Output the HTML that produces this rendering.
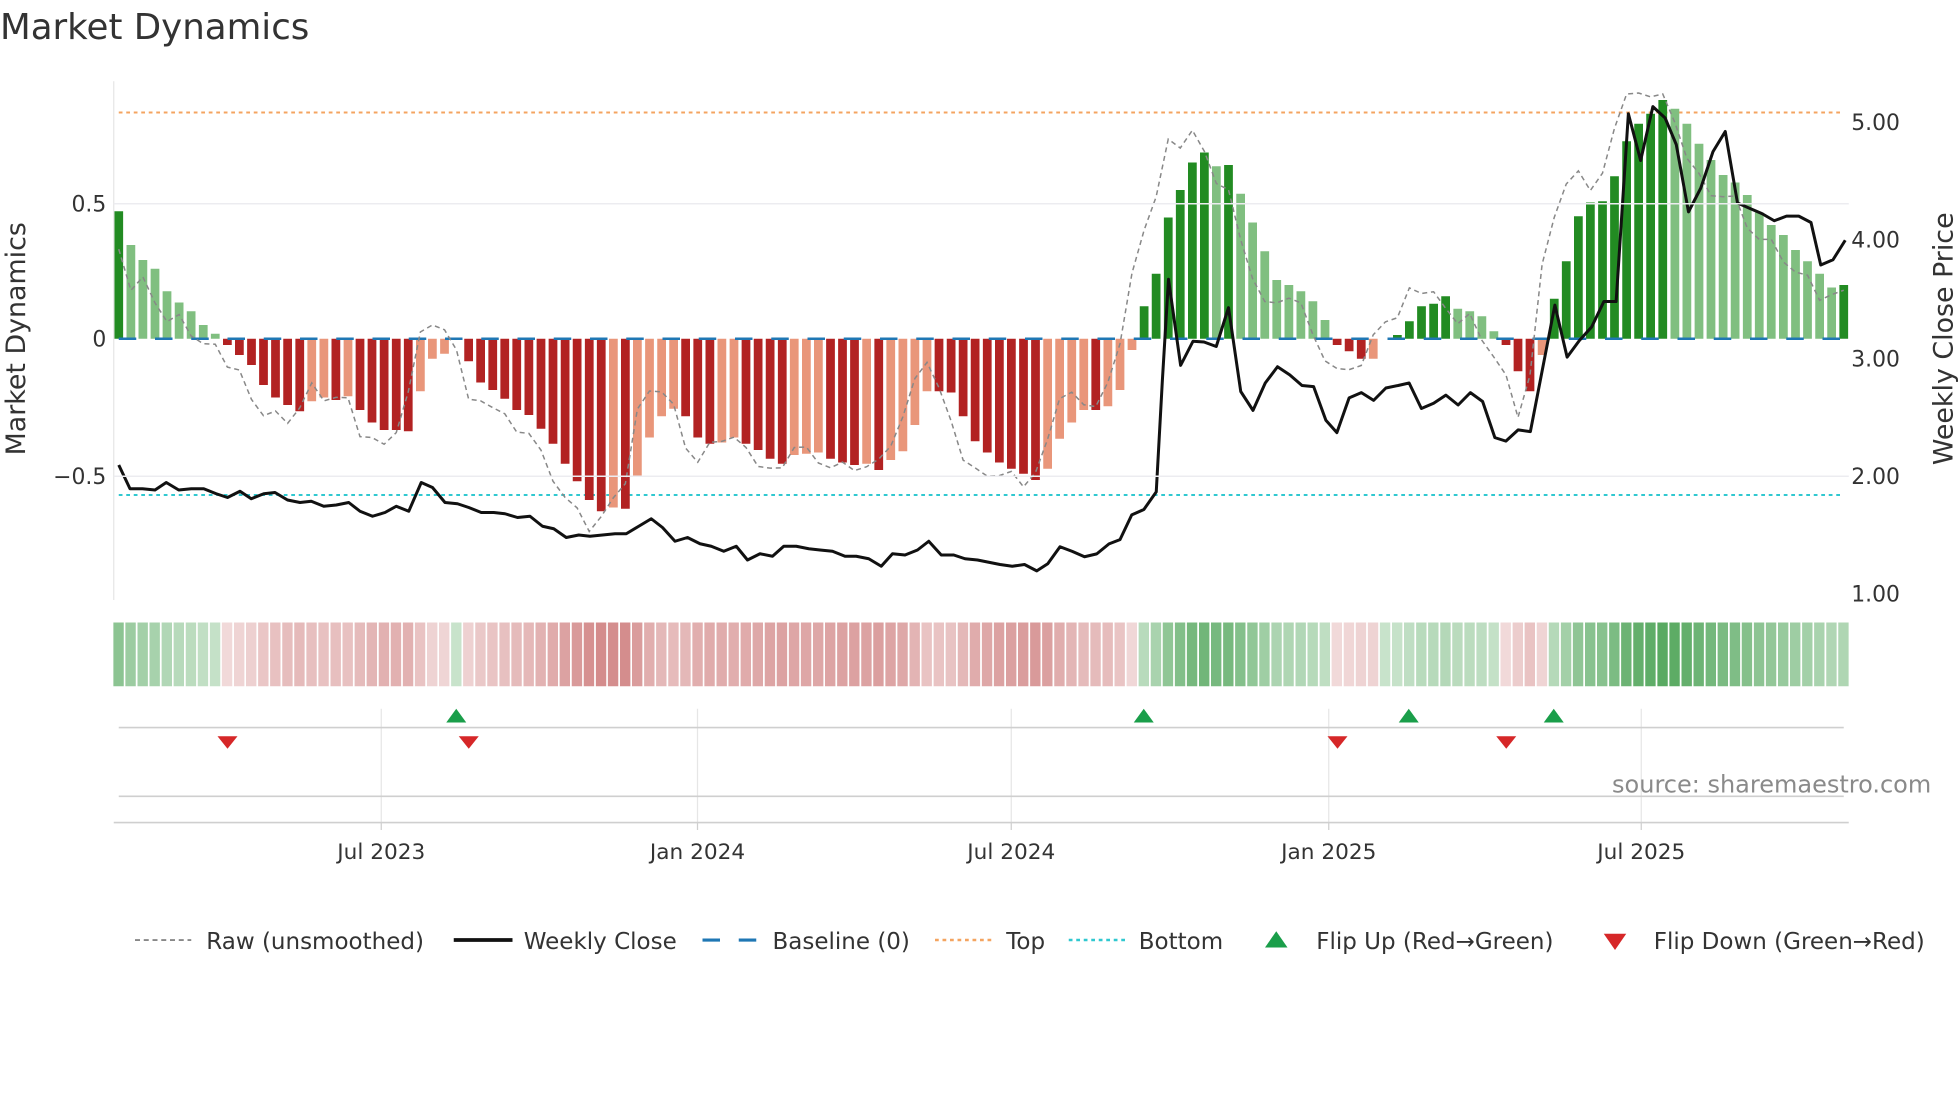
<!DOCTYPE html>
<html><head><meta charset="utf-8">
<style>
html,body{margin:0;padding:0;background:#fff;}
svg{display:block;}
text{font-family:"DejaVu Sans","Liberation Sans",sans-serif;}
</style></head>
<body>
<svg id="c" width="1960" height="1102" viewBox="0 0 1568 881.6" xmlns="http://www.w3.org/2000/svg">
<rect width="1568" height="881.6" fill="#fff"/>
<text x="0" y="31" font-size="28.5" fill="#333">Market Dynamics</text>
<g id="g"></g>
<line x1="91" y1="65" x2="91" y2="480" stroke="#e6e6e6" stroke-width="1"/>
<line x1="91" y1="163" x2="1479" y2="163" stroke="#ececf0" stroke-width="1.2"/>
<line x1="91" y1="381" x2="1479" y2="381" stroke="#ececf0" stroke-width="1.2"/>
<text x="85" y="169" font-size="17.5" fill="#333" text-anchor="end">0.5</text>
<text x="85" y="277" font-size="17.5" fill="#333" text-anchor="end">0</text>
<text x="85" y="387" font-size="17.5" fill="#333" text-anchor="end">−0.5</text>
<text x="1481" y="104" font-size="17.5" fill="#333">5.00</text>
<text x="1481" y="198" font-size="17.5" fill="#333">4.00</text>
<text x="1481" y="293" font-size="17.5" fill="#333">3.00</text>
<text x="1481" y="387" font-size="17.5" fill="#333">2.00</text>
<text x="1481" y="481" font-size="17.5" fill="#333">1.00</text>
<text transform="translate(20,271) rotate(-90)" font-size="21.5" fill="#333" text-anchor="middle">Market Dynamics</text>
<text transform="translate(1562,271) rotate(-90)" font-size="21.5" fill="#333" text-anchor="middle">Weekly Close Price</text>
<g stroke="#e6e6e6" stroke-width="1">
<line x1="305" y1="567" x2="305" y2="658"/><line x1="558" y1="567" x2="558" y2="658"/>
<line x1="809" y1="567" x2="809" y2="658"/><line x1="1063" y1="567" x2="1063" y2="658"/>
<line x1="1313" y1="567" x2="1313" y2="658"/>
</g>
<line x1="95" y1="582" x2="1475" y2="582" stroke="#cfcfcf" stroke-width="1.3"/>
<line x1="95" y1="637" x2="1475" y2="637" stroke="#cfcfcf" stroke-width="1.3"/>
<line x1="91" y1="658" x2="1479" y2="658" stroke="#cfcfcf" stroke-width="1.3"/>
<g stroke="#cfcfcf"><line x1="305" y1="658" x2="305" y2="664"/><line x1="558" y1="658" x2="558" y2="664"/><line x1="809" y1="658" x2="809" y2="664"/><line x1="1063" y1="658" x2="1063" y2="664"/><line x1="1313" y1="658" x2="1313" y2="664"/></g>
<g font-size="17.3" fill="#333" text-anchor="middle">
<text x="305" y="687">Jul 2023</text><text x="558" y="687">Jan 2024</text><text x="809" y="687">Jul 2024</text><text x="1063" y="687">Jan 2025</text><text x="1313" y="687">Jul 2025</text>
</g>
<text x="1545" y="634" font-size="19.2" fill="#8a8a8a" text-anchor="end">source: sharemaestro.com</text>
<g fill="#1a9e4a">
<polygon points="357,578 373,578 365,567"/><polygon points="907,578 923,578 915,567"/><polygon points="1119,578 1135,578 1127,567"/><polygon points="1235,578 1251,578 1243,567"/>
</g>
<g fill="#d62728">
<polygon points="174,589 190,589 182,599"/><polygon points="367,589 383,589 375,599"/><polygon points="1062,589 1078,589 1070,599"/><polygon points="1197,589 1213,589 1205,599"/>
</g>
<g font-size="18.4" fill="#333">
<line x1="108" y1="752" x2="153" y2="752" stroke="#888" stroke-width="1.5" stroke-dasharray="4,3"/>
<text x="165" y="759">Raw (unsmoothed)</text>
<line x1="363" y1="752" x2="410" y2="752" stroke="#111" stroke-width="3"/>
<text x="419" y="759">Weekly Close</text>
<line x1="562" y1="752" x2="606" y2="752" stroke="#1f77b4" stroke-width="2.5" stroke-dasharray="14,15"/>
<text x="618" y="759">Baseline (0)</text>
<line x1="748" y1="752" x2="793" y2="752" stroke="#f4a460" stroke-width="2" stroke-dasharray="3,3"/>
<text x="805" y="759">Top</text>
<line x1="855" y1="752" x2="900" y2="752" stroke="#30c8d0" stroke-width="2" stroke-dasharray="3,3"/>
<text x="911" y="759">Bottom</text>
<polygon points="1012,758 1030,758 1021,745" fill="#1a9e4a"/>
<text x="1053" y="759">Flip Up (Red→Green)</text>
<polygon points="1283,747 1301,747 1292,760" fill="#d62728"/>
<text x="1323" y="759">Flip Down (Green→Red)</text>
</g>
</svg>
<script>
var v=[102,75,63,56,38,29,22,11,4,
-5,-13,-21,-37,-47,-53,-58,-50,-47,-49,-46,-57,-67,-73,-73,-74,-42,-16,-12,0,-18,-35,-41,-48,-57,-61,-72,-84,-100,-114,-129,-138,-135,-136,-110,-79,-62,-56,-62,-79,-84,-83,-79,-84,-89,-96,-100,-93,-92,-91,-96,-99,-101,-100,-105,-97,-90,-69,-42,-42,-43,-62,-82,-91,-99,
-104,-108,-113,-104,-80,-67,-57,-57,-54,-41,-9,
26,52,97,119,141,149,138,139,116,93,70,47,43,38,30,15,
-5,-10,-16,-16,0,3,
14,26,28,34,24,22,18,6,
-5,-26,-42,-13,
32,62,98,109,110,130,158,172,180,191,184,172,156,143,131,125,115,101,91,83,71,62,52,41,43];
var light={};
[1,2,3,4,5,6,7,8,16,17,19,25,26,27,41,43,44,45,46,50,51,56,57,58,62,64,65,66,67,77,78,79,80,82,83,84,91,93,94,95,96,97,98,99,100,104,111,112,113,114,118].forEach(function(i){light[i]=1});
for(var i=129;i<=142;i++)light[i]=1;
var st=9.65,x0=95,s="";
function mix(c,m){return 'rgb('+c.map(function(k){return Math.round(255+(k-255)*m)}).join(',')+')';}
for(var i=0;i<v.length;i++){
 var x=x0+i*st-st/2, a=v[i], col;
 if(a>=0){var t=a/191,m=0.3+0.6*t;col=mix([70,160,80],m);}
 else{var t=-a/138,m=0.22+0.5*t;col=mix([195,95,95],m);}
 s+='<rect x="'+(x+0.5).toFixed(1)+'" y="498" width="'+(st-1.3).toFixed(1)+'" height="51" fill="'+col+'"/>';
}
s+='<line x1="95" y1="90" x2="1475" y2="90" stroke="#f4a460" stroke-width="1.6" stroke-dasharray="3,3"/>';
s+='<line x1="95" y1="396" x2="1475" y2="396" stroke="#30c8d0" stroke-width="1.6" stroke-dasharray="3,3"/>';
for(var i=0;i<v.length;i++){
 var a=v[i]; if(a==0)continue;
 var x=x0+i*st-3.5,col;
 if(a>0)col=light[i]?'#80bf80':'#228b22';else col=light[i]?'#e9967a':'#b22222';
 var y=a>0?271-a:271, h=Math.abs(a);
 s+='<rect x="'+x.toFixed(1)+'" y="'+y+'" width="7" height="'+h+'" fill="'+col+'"/>';
}
s+='<line x1="95" y1="271" x2="1475" y2="271" stroke="#1f77b4" stroke-width="2" stroke-dasharray="14,15"/>';
var pr=[];
for(var i=0;i<v.length;i++){var n=v[Math.min(i+1,v.length-1)],p=v[Math.max(i-1,0)];var r=v[i]+0.9*(n-p)+((i*37)%11-5)*1.2;pr.push((x0+i*st).toFixed(1)+','+(271-r).toFixed(1));}
s+='<polyline points="'+pr.join(' ')+'" fill="none" stroke="#888" stroke-width="1.2" stroke-dasharray="4,3"/>';
var P=[[95,372],[104,391],[114,391],[124,392],[133,386],[143,392],[153,391],[163,391],[173,395],[182,398],[192,393],[201,399],[211,395],[220,394],[230,400],[240,402],[249,401],[259,405],[269,404],[279,402],[288,409],[298,413],[308,410],[317,405],[327,409],[337,386],[346,390],[356,402],[366,403],[375,406],[385,410],[395,410],[404,411],[414,414],[424,413],[434,421],[443,423],[453,430],[463,428],[472,429],[482,428],[492,427],[501,427],[511,421],[521,415],[530,422],[540,433],[550,430],[560,435],[569,437],[579,441],[589,437],[598,448],[608,443],[618,445],[627,437],[637,437],[647,439],[656,440],[666,441],[676,445],[685,445],[695,447],[705,453],[714,443],[724,444],[734,440],[743,433],[753,444],[763,444],[772,447],[782,448],[792,450]];
var Z=[[0,1420],[20,1425],[40,1420],[60,1438],[78,1418],[98,1370],[118,1383],[138,1398],[158,1390],[178,1362],[196,1350],[215,1280],[235,1265],[255,1215],[265,900],[275,615],[295,858],[315,790],[333,792],[353,805],[373,695],[393,932],[413,985],[433,908],[453,862],[473,885],[493,915],[512,918],[532,1013],[550,1048],[570,950],[590,935],[610,957],[630,922],[650,915],[668,908],[688,980],[708,965],[728,942],[748,970],[768,935],[788,960],[808,1062],[826,1072],[846,1040],[866,1045],[906,688],[926,835],[946,788],[966,750],[986,678],[1006,678],[1026,148],[1046,280],[1066,128],[1086,160],[1104,235],[1124,425],[1144,358],[1164,255],[1184,198],[1204,400],[1224,415],[1244,430],[1264,450],[1284,437],[1304,437],[1324,455],[1340,575],[1360,560],[1380,505]];
Z.forEach(function(q){P.push([800+q[0]*0.49,271+(q[1]-783)*0.2835]);});
s+='<polyline points="'+P.map(function(q){return q[0].toFixed(1)+','+q[1].toFixed(1)}).join(' ')+'" fill="none" stroke="#111" stroke-width="2.4" stroke-linejoin="round"/>';
document.getElementById('g').innerHTML=s;
</script>
</body></html>
